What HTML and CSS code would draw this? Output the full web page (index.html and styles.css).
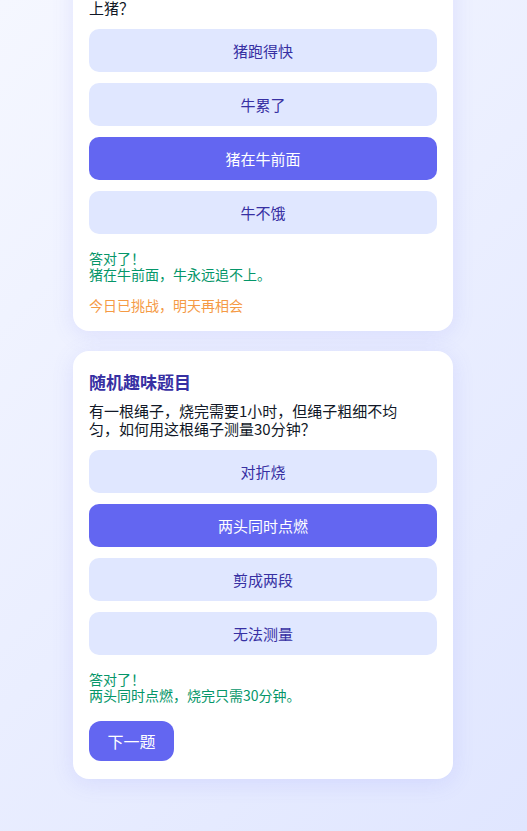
FILE: index.html
```html
<!DOCTYPE html>
<html lang="zh-CN">
<head>
<meta charset="utf-8">
<title>趣味题目</title>
<link rel="stylesheet" href="styles.css">
</head>
<body>
<main class="page">
  <section class="card">
    <h2 class="card-title">每日一题</h2>
    <p class="question">猪和牛赛跑，猪在前，牛在后，为什么牛永远追不上猪？</p>
    <div class="options">
      <button class="option">猪跑得快</button>
      <button class="option">牛累了</button>
      <button class="option selected">猪在牛前面</button>
      <button class="option">牛不饿</button>
    </div>
    <p class="feedback">答对了！<br>猪在牛前面，牛永远追不上。</p>
    <p class="notice">今日已挑战，明天再相会</p>
  </section>
  <section class="card">
    <h2 class="card-title">随机趣味题目</h2>
    <p class="question">有一根绳子，烧完需要1小时，但绳子粗细不均匀，如何用这根绳子测量30分钟？</p>
    <div class="options">
      <button class="option">对折烧</button>
      <button class="option selected">两头同时点燃</button>
      <button class="option">剪成两段</button>
      <button class="option">无法测量</button>
    </div>
    <p class="feedback">答对了！<br>两头同时点燃，烧完只需30分钟。</p>
    <button class="next">下一题</button>
  </section>
</main>
</body>
</html>
```

FILE: styles.css
```css
* { box-sizing: border-box; }
html, body { margin: 0; padding: 0; }
body {
  height: 100vh;
  overflow: hidden;
  background: linear-gradient(135deg, #f5f7ff 0%, #e0e6ff 100%);
  font-family: "Noto Sans CJK SC", "Noto Sans", sans-serif;
  text-spacing-trim: space-all;
}
.page {
  height: 100vh;
  display: flex;
  flex-direction: column;
  justify-content: flex-end;
  align-items: center;
  gap: 20px;
  padding-bottom: 52px;
  padding-right: 1px;
}
.card {
  flex-shrink: 0;
  width: 380px;
  background: #ffffff;
  border-radius: 16px;
  padding: 19px 16px 18px;
  box-shadow: 0 4px 22px rgba(99, 102, 241, 0.13);
  display: flex;
  flex-direction: column;
}
.card-title {
  margin: 0 0 8px;
  font-size: 17px;
  line-height: 24px;
  font-weight: 700;
  color: #3730a3;
}
.question {
  margin: 0 0 12px;
  padding-right: 12px;
  font-size: 15px;
  line-height: 18px;
  color: #111827;
}
.options {
  display: flex;
  flex-direction: column;
  gap: 11px;
}
.option {
  height: 43px;
  border: none;
  border-radius: 10px;
  background: #e0e7ff;
  color: #3730a3;
  font-family: inherit;
  font-size: 15px;
  padding: 0;
}
.option.selected {
  background: #6366f1;
  color: #ffffff;
}
.feedback {
  margin: 16px 0 0;
  font-size: 14px;
  line-height: 16px;
  color: #059669;
}
.notice {
  margin: 15px 0 0;
  font-size: 14px;
  line-height: 16px;
  color: #f59a45;
}
.next {
  align-self: flex-start;
  margin-top: 18px;
  height: 40px;
  width: 85px;
  border: none;
  border-radius: 12px;
  background: #6366f1;
  color: #ffffff;
  font-family: inherit;
  font-size: 16px;
  padding: 0;
}
```
